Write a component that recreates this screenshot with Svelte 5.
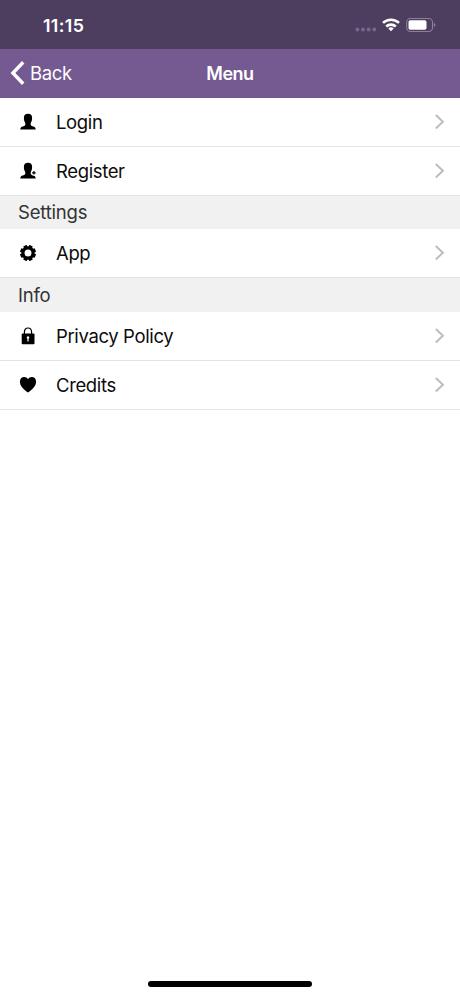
<script lang="ts">
	type Item = { label: string; icon: string };
	type Section = { title?: string; items: Item[] };

	const sections: Section[] = [
		{
			items: [
				{ label: 'Login', icon: 'person' },
				{ label: 'Register', icon: 'person-add' }
			]
		},
		{ title: 'Settings', items: [{ label: 'App', icon: 'gear' }] },
		{
			title: 'Info',
			items: [
				{ label: 'Privacy Policy', icon: 'lock' },
				{ label: 'Credits', icon: 'heart' }
			]
		}
	];

	const teeth = [0, 45, 90, 135, 180, 225, 270, 315];
</script>

<div class="screen">
	<div class="status">
		<span class="time">11:15</span>
		<svg class="status-icons" width="84" height="20" viewBox="0 0 84 20">
			<g fill="#75668a">
				<circle cx="4.4" cy="13.6" r="2" />
				<circle cx="10" cy="13.6" r="2" />
				<circle cx="15.6" cy="13.6" r="2" />
				<circle cx="21.3" cy="13.6" r="2" />
			</g>
			<g fill="none" stroke="#fff" stroke-width="2.6">
				<path d="M30 6.900a11.600 11.600 0 0 1 16 0" />
				<path d="M33.200 10.500a7 7 0 0 1 9.600 0" />
			</g>
			<path d="M38 15.300l-2.700-2.700a3.800 3.800 0 0 1 5.400 0z" fill="#fff" />
			<rect x="53.700" y="2.500" width="25.800" height="13" rx="3.700" fill="none" stroke="#8d809c" stroke-width="1.100" />
			<rect x="55.500" y="4.300" width="18" height="9.400" rx="1.800" fill="#fff" />
			<path d="M80.800 6.800v4.300q1.600-.7 1.600-2.150T80.800 6.800z" fill="#8d809c" />
		</svg>
	</div>

	<header class="nav">
		<button class="back">
			<svg width="15" height="26" viewBox="0 0 15 26">
				<path d="M13.200 2.300L2.900 13l10.300 10.700" fill="none" stroke="#fff" stroke-width="3.400" />
			</svg>
			<span>Back</span>
		</button>
		<h1>Menu</h1>
	</header>

	<main>
		{#each sections as section}
			{#if section.title}
				<h2>{section.title}</h2>
			{/if}
			{#each section.items as item}
				<div class="row">
					<svg class="icon" width="18" height="18" viewBox="0 0 18 18">
						{#if item.icon === 'person' || item.icon === 'person-add'}
							<path
								d="M9 .8c2.700 0 4.100 1.400 4.100 3.900 0 2.100-.4 3.400-1 4.600-.5 1-.5 2-.3 2.700.3.900 1.400 1.200 2.500 1.500 1.500.4 2.300 1.100 2.400 2.900H1.300c.1-1.800.9-2.500 2.400-2.900 1.100-.3 2.200-.6 2.500-1.500.2-.7.2-1.700-.3-2.700-.6-1.200-1-2.500-1-4.600C4.900 2.200 6.300.8 9 .8z"
							/>
							{#if item.icon === 'person-add'}
								<path d="M14.900 8.200v5.200M12.300 10.800h5.200" stroke="#fff" stroke-width="2.600" />
								<path d="M14.900 9v3.600M13.100 10.800h3.600" stroke="#000" stroke-width="1.200" />
							{/if}
						{:else if item.icon === 'gear'}
							{#each teeth as angle}
								<rect x="7.100" y="1" width="3.800" height="4" rx=".5" transform="rotate({angle + 22.5} 9 9)" />
							{/each}
							<circle cx="9" cy="9" r="5.100" fill="none" stroke="#000" stroke-width="3.200" />
						{:else if item.icon === 'lock'}
							<path d="M5.400 8V5.200C5.400 2.500 6.800 1 9 1s3.600 1.500 3.600 4.200V8" fill="none" stroke="#000" stroke-width="1.200" />
							<rect x="2.700" y="6.600" width="12.800" height="10.600" rx="1" />
							<path d="M9 9.200a1.400 1.400 0 0 1 .6 2.600v2.700H8.400v-2.700A1.400 1.400 0 0 1 9 9.200z" fill="#fff" />
						{:else}
							<path
								d="M9 16.500C6.200 14.300.9 10.900.9 5.700.9 2.900 2.700 1 5.100 1 6.900 1 8.200 1.800 9 3.200 9.800 1.800 11.100 1 12.900 1c2.400 0 4.200 1.900 4.200 4.700C17.100 10.900 11.800 14.300 9 16.500z"
							/>
						{/if}
					</svg>
					<span class="label">{item.label}</span>
					<svg class="chevron" width="11" height="16" viewBox="0 0 11 16">
						<path d="M1.800 1L8.900 7.700l-7.100 6.700" fill="none" stroke="#bdbdbf" stroke-width="2" />
					</svg>
				</div>
			{/each}
		{/each}
	</main>

	<div class="home"></div>
</div>

<style>
	:global(body) {
		background: #fff;
	}

	.screen {
		display: flex;
		flex-direction: column;
		width: 460px;
		height: 996px;
		font-family: Inter, 'Liberation Sans', sans-serif;
		font-size: 18.5px;
		letter-spacing: -0.37px;
		color: #0c0c0c;
		background: #fff;
	}

	.status {
		box-sizing: border-box;
		display: flex;
		justify-content: space-between;
		align-items: center;
		height: 49px;
		padding: 3px 23px 0 43px;
		background: #4d3d5f;
	}

	.time {
		padding-bottom: 2px;
		font-size: 17.8px;
		font-weight: 600;
		letter-spacing: 0.35px;
		color: #fff;
	}

	.nav {
		display: grid;
		grid-template-columns: 1fr auto 1fr;
		align-items: center;
		height: 49px;
		color: #fff;
		background: #755991;
	}

	.back {
		display: flex;
		align-items: center;
		gap: 5px;
		padding: 0 0 1px 10px;
		border: 0;
		background: none;
		font: inherit;
		letter-spacing: inherit;
		color: inherit;
	}

	h1 {
		margin: 0;
		font-size: 18px;
		font-weight: 600;
		letter-spacing: -0.5px;
	}

	h2 {
		box-sizing: border-box;
		height: 33px;
		margin: 0;
		padding-left: 18px;
		font-size: 18.5px;
		font-weight: 400;
		line-height: 33px;
		letter-spacing: -0.2px;
		color: #333;
		background: #f1f1f1;
	}

	.row + h2 ~ h2 {
		height: 34px;
		line-height: 34px;
	}

	.row {
		box-sizing: border-box;
		display: flex;
		align-items: center;
		height: 49px;
		padding: 0 15px 0 19px;
		border-bottom: 1px solid #e4e4e5;
	}

	.label {
		flex: 1;
		margin-left: 19px;
	}

	.home {
		width: 164px;
		height: 6px;
		margin: auto auto 9px;
		border-radius: 3px;
		background: #000;
	}
</style>
